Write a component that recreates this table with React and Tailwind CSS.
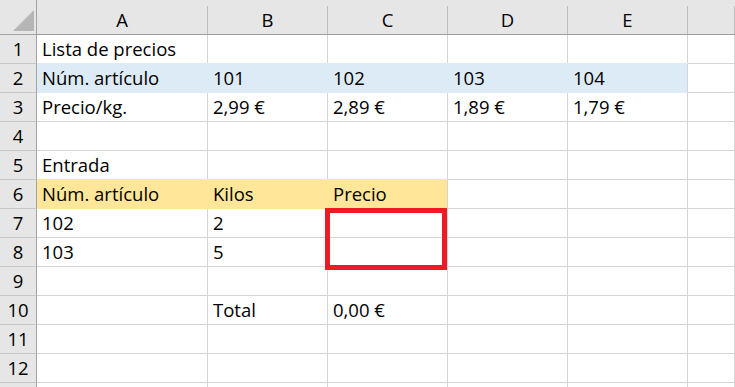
import React from 'react';

const COLS = ['A', 'B', 'C', 'D', 'E', ''];

// cell values per row, columns A..F
const ROWS = [
  ['Lista de precios', '', '', '', '', ''],
  ['Núm. artículo', '101', '102', '103', '104', ''],
  ['Precio/kg.', '2,99 €', '2,89 €', '1,89 €', '1,79 €', ''],
  ['', '', '', '', '', ''],
  ['Entrada', '', '', '', '', ''],
  ['Núm. artículo', 'Kilos', 'Precio', '', '', ''],
  ['102', '2', '', '', '', ''],
  ['103', '5', '', '', '', ''],
  ['', '', '', '', '', ''],
  ['', 'Total', '0,00 €', '', '', ''],
  ['', '', '', '', '', ''],
  ['', '', '', '', '', ''],
  ['', '', '', '', '', ''],
];

// filled ranges: row index -> last filled column index
const FILLS = {
  1: { last: 4, cls: 'bg-[#ddebf7]', edge: 'border-[#ddebf7] shadow-[0_-1px_0_#ddebf7]' },
  5: { last: 2, cls: 'bg-[#ffe699]', edge: 'border-[#ffe699] shadow-[0_-1px_0_#ffe699]' },
};

const Cell = ({ value, row, col }) => {
  const fill = FILLS[row];
  const filled = fill && col <= fill.last;
  let cls = 'flex items-center overflow-hidden whitespace-nowrap pl-[5px] border-r border-b border-[#d4d4d4]';
  if (filled) {
    cls += ` ${fill.cls} ${fill.edge}`;
    if (col === fill.last) cls += ' !border-r-[#d4d4d4]';
  }
  return <div className={cls}>{value}</div>;
};

export default function App() {
  return (
    <div className="h-[387px] w-[735px] overflow-hidden bg-white font-['Open_Sans',sans-serif] text-[18.5px] leading-[1.2] text-black">
      <div className="relative grid grid-cols-[37px_171px_120px_120px_120px_120px_1fr] grid-rows-[35px_repeat(13,29px)]">
        {/* corner */}
        <div className="border-r border-b border-[#a3a3a3] bg-[#e6e6e6]">
          <svg width="36" height="34" viewBox="0 0 36 34">
            <polygon points="34,10 34,31 13,31" fill="#b5b5b5" />
          </svg>
        </div>
        {COLS.map((c, i) => (
          <div key={`h${i}`} className="border-b border-[#9e9e9e] bg-[#e6e6e6] pt-[6px]">
            <div className="flex h-[28px] items-center justify-center border-r border-[#bdbdbd]">{c}</div>
          </div>
        ))}
        {ROWS.map((r, ri) => (
          <React.Fragment key={ri}>
            <div className="flex items-center justify-center border-r border-b border-r-[#a3a3a3] border-b-[#c8c8c8] bg-[#e6e6e6]">
              {ri < 12 ? ri + 1 : ''}
            </div>
            {r.map((v, ci) => (
              <Cell key={ci} value={v} row={ri} col={ci} />
            ))}
          </React.Fragment>
        ))}
        {/* highlight round C7:C8 */}
        <div className="absolute left-[325px] top-[208px] h-[62px] w-[122px] border-[5px] border-[#ed1c24]" />
      </div>
    </div>
  );
}
